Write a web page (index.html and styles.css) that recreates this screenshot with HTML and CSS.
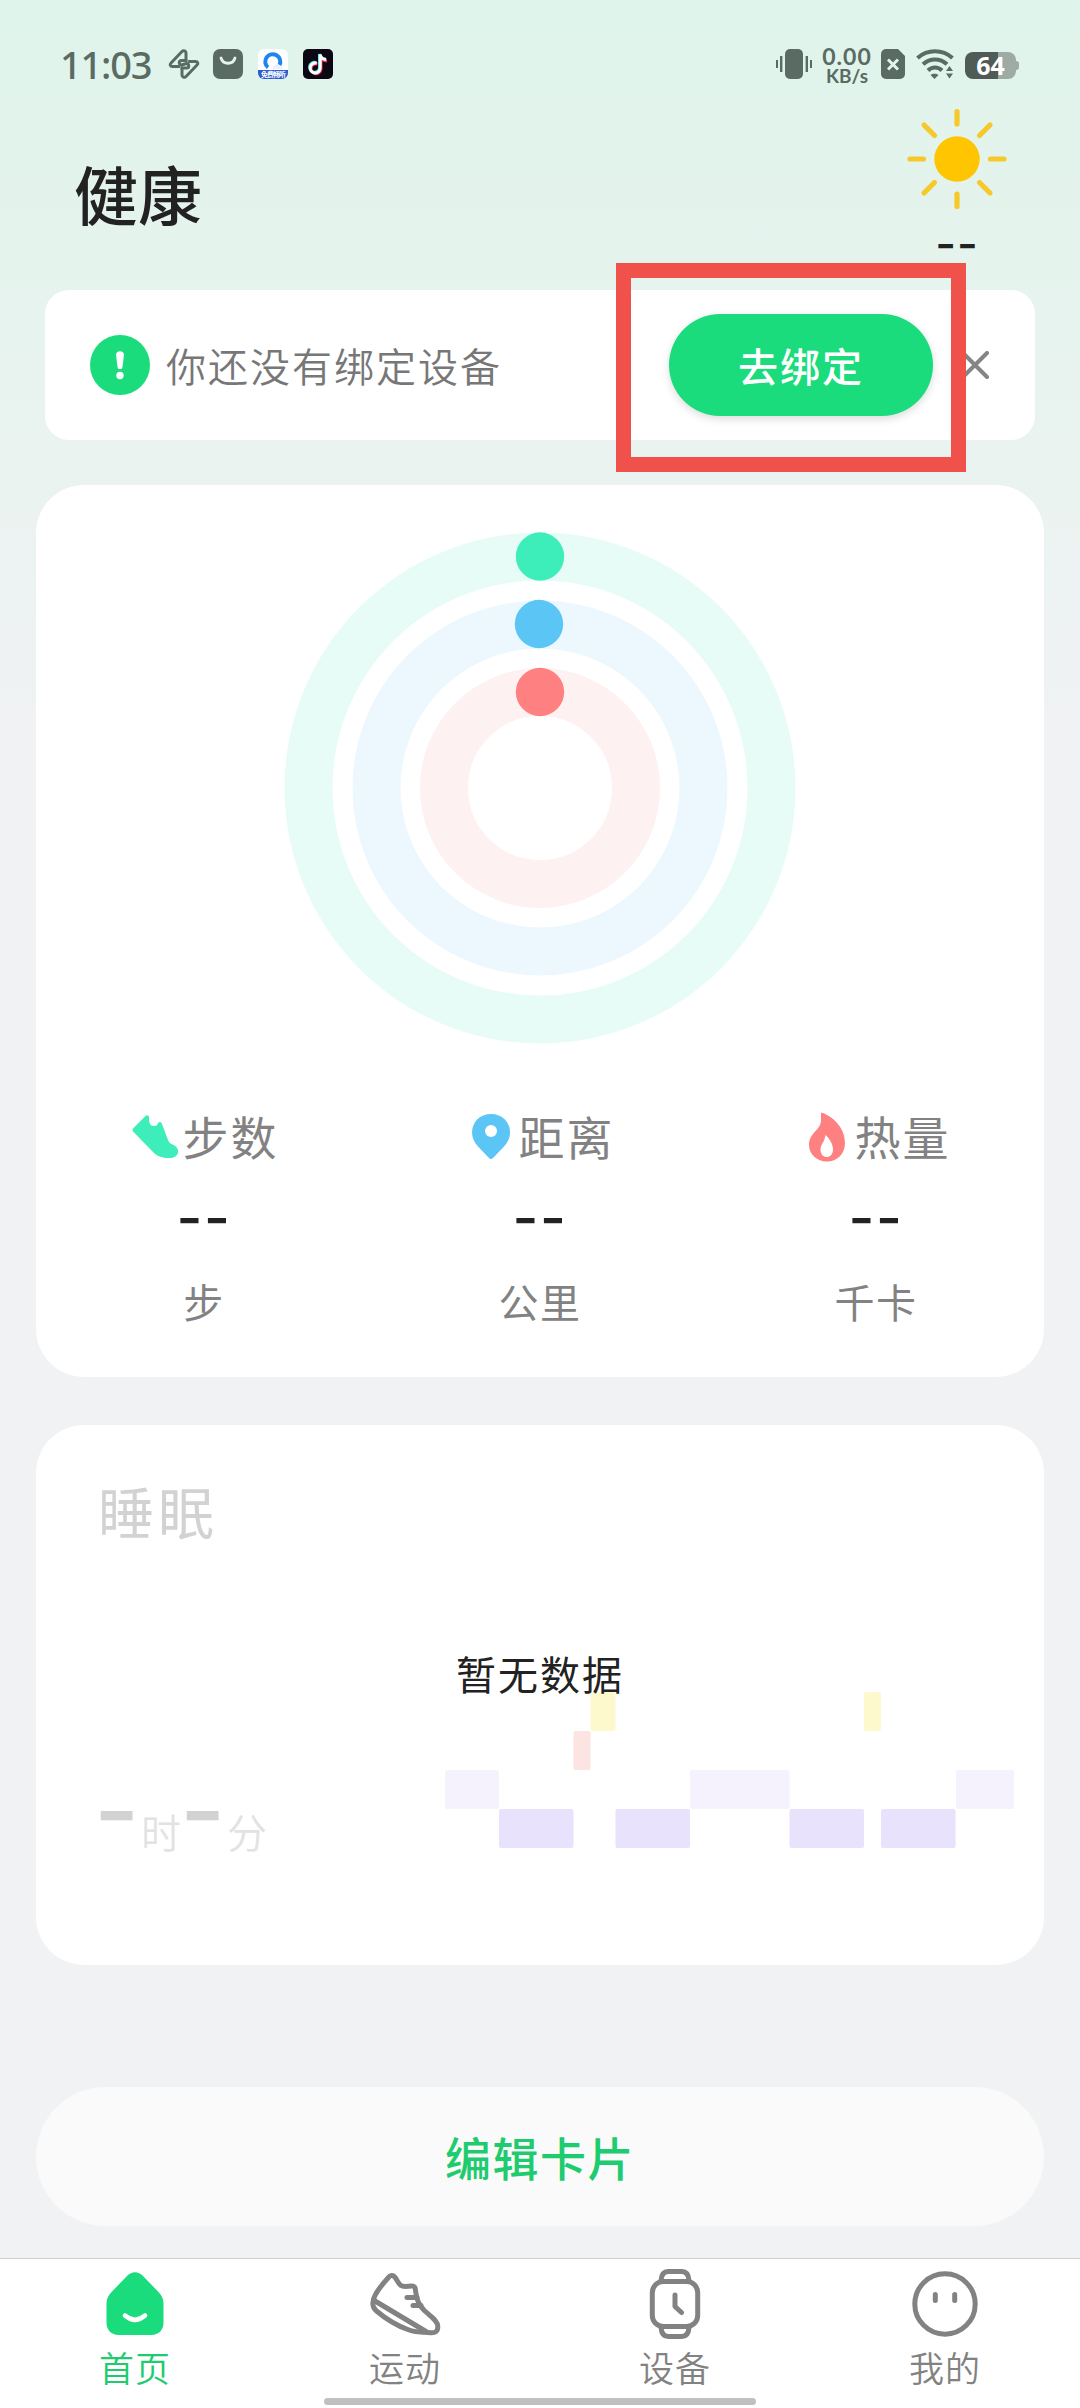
FILE: index.html
```html
<!DOCTYPE html>
<html lang="zh-CN">
<head>
<meta charset="utf-8">
<title>健康</title>
<link rel="stylesheet" href="styles.css">
</head>
<body>
<div class="screen">
  <header class="status">
    <div class="status-left">
      <span class="clock">11:03</span>
      <svg class="ic-flash" width="32" height="32" viewBox="0 0 32 32" fill="none" stroke="#5a6b63" stroke-width="3" stroke-linejoin="round" stroke-linecap="round"><path d="M11 18.500H4.500c-2.500 0-3-2-1.500-3.500L14 3.500c1.500-1.500 4-.500 4 1.500v7M21 13.500h6.500c2.500 0 3 2 1.500 3.500L18 28.500c-1.500 1.500-4 .500-4-1.500v-7"/><path d="M18 12.500h-4.500c-3 0-3 4 0 4.500l5-1.500c3 .500 3 4.500 0 4.500H14"/></svg>
      <svg class="ic-bag" width="30" height="30" viewBox="0 0 30 30"><rect width="30" height="30" rx="7" fill="#5a6b63"/><path d="M8 9c2 7 12 7 14 0" fill="none" stroke="#e6f3ec" stroke-width="2.800" stroke-linecap="round"/></svg>
      <div class="browser-app">
        <svg width="30" height="30" viewBox="0 0 30 30"><path d="M0 21V6a6 6 0 0 1 6-6h18a6 6 0 0 1 6 6v15z" fill="#fff"/><path d="M10 18.500A7.500 7.500 0 1 1 21.500 16" fill="none" stroke="#1e86ee" stroke-width="4"/><path d="M15 19c0-4 6-5 7-1.500 2 0 2.500 1 2.500 2.500H15z" fill="#e9f2fc"/><path d="M0 21h30v3a6 6 0 0 1-6 6H6a6 6 0 0 1-6-6z" fill="#2e5bd0"/></svg>
        <span>免费畅听</span>
      </div>
      <svg class="ic-note" width="30" height="30" viewBox="0 0 30 30"><rect width="30" height="30" rx="5" fill="#0b0813"/><g fill="none" stroke-width="3"><path d="M13 13.500a5 5 0 1 0 3.500 5V5c.500 3 3 5 6 5" stroke="#2ee6e2"/><path d="M14.500 15a5 5 0 1 0 3.500 5V7c.500 3 3 5 6 5" stroke="#f0305a"/><path d="M13.700 14.200a5 5 0 1 0 3.500 5V5.500c.500 3 3 5 6 5" stroke="#fff"/></g></svg>
    </div>
    <div class="status-right">
      <svg width="38" height="30" viewBox="0 0 38 30" fill="#5a6b63"><rect x="10" width="18" height="30" rx="5"/><path d="M5 7h2.400v16H5zM1 11h2v8H1zM30.600 7H33v16h-2.400zM35 11h2v8h-2z"/></svg>
      <div class="speed"><span class="speed-num">0.00</span><span class="speed-unit">KB/s</span></div>
      <svg class="ic-sim" width="24" height="30" viewBox="0 0 24 30"><path d="M5 0h12l7 7v18a5 5 0 0 1-5 5H5a5 5 0 0 1-5-5V5a5 5 0 0 1 5-5z" fill="#5a6b63"/><path d="M7 10.500l10 10m0-10l-10 10" stroke="#e2f4eb" stroke-width="3"/></svg>
      <svg class="ic-wifi" width="38" height="30" viewBox="0 0 38 30"><g fill="none" stroke="#5a6b63" stroke-width="4"><path d="M1.500 9c10-9 25-9 35 0"/><path d="M7 15.300c7-6.500 17-6.500 24 0"/><path d="M12 21.500c4-4 10-4 14 0"/></g><path d="M14.500 26c2-1.600 6-1.600 8 0l-4 4z" fill="#5a6b63"/><path d="M30 22l3.500-5 3.500 5zM30 24.500h7l-3.500 5z" fill="#5a6b63"/></svg>
      <div class="battery"><span>64</span></div>
    </div>
  </header>

  <div class="heading">
    <h1>健康</h1>
    <div class="weather">
      <svg width="104" height="104" viewBox="-52 -52 104 104"><circle r="22.700" fill="#ffc500"/><g stroke="#f6c829" stroke-width="5.200" stroke-linecap="round"><path d="M0-47.500V-35M0 35V47.500M-47 0H-33.500M33.500 0H47M-33-34l10.500 10.500M33-34L22.500-23.500M-33 34l10.500-10.500M33 34L22.500 23.500"/></g></svg>
      <span class="dash">--</span>
    </div>
  </div>

  <section class="banner">
    <svg width="60" height="60" viewBox="0 0 60 60"><circle cx="30" cy="30" r="30" fill="#1adc7c"/><path d="M26 19.500c0-4.500 8-4.500 8 0l-1.500 12.500c-.300 3-4.700 3-5 0z" fill="#fff"/><circle cx="30" cy="40.500" r="3.700" fill="#fff"/></svg>
    <span class="banner-text">你还没有绑定设备</span>
    <button class="bind">去绑定</button>
    <svg class="close" width="28" height="28" viewBox="0 0 28 28"><path d="M2 2l24 24M26 2L2 26" stroke="#858585" stroke-width="4" stroke-linecap="round"/></svg>
    <div class="marker"></div>
  </section>

  <section class="card activity">
    <svg class="rings" width="512" height="512" viewBox="-256 -256 512 512">
      <g fill="none" stroke-width="48">
        <circle r="231.500" stroke="#e8fcf7"/><circle r="163.500" stroke="#ecf8fe"/><circle r="96" stroke="#fef1f1"/>
      </g>
      <circle cy="-231.500" r="24.200" fill="#3eeeba"/><circle cx="-1" cy="-164" r="24.200" fill="#5bc5f5"/><circle cy="-96" r="24.200" fill="#ff8081"/>
    </svg>
    <div class="stats">
      <div class="stat">
        <div class="stat-name"><svg width="50" height="50" viewBox="0 0 50 50"><path d="M3.500 16L15.500 4c1.500-1.500 3.500-.500 3.500 1.500 0 9 3 9 8 8 .800-3.500 3.500-5 5-1.500l6 16c1 2.500 2 3.500 4.500 4.500 9 3.500 7 14-4 13.500-6 0-11-1.500-15-5.500L3.500 20c-1.300-1.300-1.300-2.700 0-4z" fill="#3eeeba"/></svg><span>步数</span></div>
        <span class="dash">--</span><span class="unit">步</span>
      </div>
      <div class="stat">
        <div class="stat-name"><svg width="50" height="50" viewBox="0 0 50 50"><path d="M25 2c11 0 19 8 19 18.500 0 5.500-2.500 10-6 14L27 46c-1.300 1.300-2.700 1.300-4 0L12 34.500c-3.500-4-6-8.500-6-14C6 10 14 2 25 2z" fill="#5bc5f5"/><circle cx="25" cy="19" r="6" fill="#fff"/></svg><span>距离</span></div>
        <span class="dash">--</span><span class="unit">公里</span>
      </div>
      <div class="stat">
        <div class="stat-name"><svg width="50" height="50" viewBox="0 0 50 50"><path d="M19 1.500c0-1 1-1 2-.500C33 6 43 17 43 31c0 11-8 18.500-18 18.500S7 42 7 33c0-13 13-15 12-26z" fill="#ff8081"/><path d="M23.500 23c5 4.500 7.500 10 7.500 14.500 0 10-12.500 10-12.500 0 0-3 1.500-5.500 3-8 1-2 1.500-4 2-6.500z" fill="#fff"/></svg><span>热量</span></div>
        <span class="dash">--</span><span class="unit">千卡</span>
      </div>
    </div>
  </section>

  <section class="card sleep">
    <h2>睡眠</h2>
    <div class="sleep-row">
      <div class="duration"><span class="dash">-</span><span class="t">时</span><span class="dash">-</span><span class="t">分</span></div>
      <svg width="569" height="156" viewBox="0 0 569 156">
        <g fill="#f5f2fe"><rect y="78" width="54" height="39" rx="2"/><rect x="245" y="78" width="99.500" height="39" rx="2"/><rect x="511" y="78" width="58" height="39" rx="2"/></g>
        <g fill="#e8e2fc"><rect x="54" y="117" width="74.500" height="39" rx="2"/><rect x="170.500" y="117" width="74.500" height="39" rx="2"/><rect x="344.500" y="117" width="74.500" height="39" rx="2"/><rect x="436" y="117" width="74.500" height="39" rx="2"/></g>
        <rect x="128.500" y="39" width="17" height="39" rx="2" fill="#fce4e2"/>
        <g fill="#fef9cd"><rect x="145.500" width="25" height="39" rx="2"/><rect x="419" width="17" height="39" rx="2"/></g>
      </svg>
    </div>
    <span class="empty">暂无数据</span>
  </section>

  <button class="edit">编辑卡片</button>

  <nav class="tabs">
    <a class="tab active">
      <svg width="80" height="80" viewBox="0 0 80 80"><path d="M32 11c5-5 11-5 16 0l15 15.500c3.500 3.500 5.500 7 5.500 12V58c0 7-5 12-12 12h-33c-7 0-12-5-12-12V38.500c0-5 2-8.500 5.500-12z" fill="#1adc7c"/><path d="M30 50.500c6.500 5.600 13.500 5.600 20 0" fill="none" stroke="#fff" stroke-width="4.600" stroke-linecap="round"/></svg>
      <span>首页</span>
    </a>
    <a class="tab">
      <svg width="80" height="80" viewBox="0 0 80 80" fill="none" stroke="#828282" stroke-width="5" stroke-linejoin="round" stroke-linecap="round"><path d="M23 13c2-3 5-3.500 7.500 0 4 6 4 8.500 10 8.500l6-.500c2.500 0 3.500.500 3.800 3 1.500 12 4 16.500 9 21.500 6 5.500 13.500 10 13.500 16 0 5-2.500 6.500-7 6.200-9-1-15.500 0-23-3.200C33 61 21 54 11.500 46 6.500 42 7 35.500 10.500 29.500 14 23 18 18.500 23 13z"/><path d="M10 36l51 30.500M42 32.500h10M48 40.500h8"/></svg>
      <span>运动</span>
    </a>
    <a class="tab">
      <svg width="80" height="80" viewBox="0 0 80 80" fill="none" stroke="#828282" stroke-width="5" stroke-linejoin="round" stroke-linecap="round"><rect x="17.300" y="16.500" width="45.400" height="45" rx="11"/><path d="M26 15.500c.500-6 2.500-9 7-9h14c4.500 0 6.500 3 7 9M26 62.500c.500 6 2.500 9 7 9h14c4.500 0 6.500-3 7-9M40 30v11.500l6.500 6"/></svg>
      <span>设备</span>
    </a>
    <a class="tab">
      <svg width="80" height="80" viewBox="0 0 80 80" fill="none" stroke="#828282" stroke-width="5" stroke-linecap="round"><circle cx="40" cy="39" r="30.200"/><path d="M30.300 29.500v6M49.700 29.500v6"/></svg>
      <span>我的</span>
    </a>
  </nav>
  <div class="home-bar"></div>
</div>
</body>
</html>
```
FILE: styles.css
```css
* { box-sizing: border-box; margin: 0; padding: 0; }
body { font-family: "Noto Sans CJK SC", sans-serif; }
svg { display: block; flex: none; }
button { border: 0; font-family: inherit; }
.screen {
  position: relative;
  width: 1080px;
  height: 2408px;
  display: flex;
  flex-direction: column;
  overflow: hidden;
  background: linear-gradient(#dff4ea 0, #f1f2f4 760px);
}
.dash { font-family: Inter, sans-serif; font-weight: 500; color: #222; }

.status { height: 128px; padding: 0 60px 0 60px; display: flex; justify-content: space-between; align-items: center; color: #5a6b63; }
.status-left, .status-right { display: flex; align-items: center; }
.clock { width: 108px; font: 500 38px/40px "Noto Sans", sans-serif; letter-spacing: -1.2px; white-space: nowrap; }
.ic-bag { margin-left: 13px; }
.browser-app { position: relative; margin-left: 15px; }
.browser-app span { position: absolute; left: -5px; bottom: 0; width: 40px; text-align: center; font-size: 7px; line-height: 9px; font-weight: 700; color: #fff; letter-spacing: -1px; }
.ic-note { margin-left: 15px; }
.speed { width: 56px; margin-left: 6px; display: flex; flex-direction: column; align-items: center; font-family: Lato, sans-serif; font-weight: 700; }
.speed-num { font-size: 23px; line-height: 22px; letter-spacing: 1px; }
.speed-unit { font-size: 19px; line-height: 17px; }
.ic-sim { margin-left: 6px; }
.ic-wifi { margin-left: 11px; }
.battery {
  position: relative;
  width: 51px; height: 27px;
  margin: 3px 4px 0 11px;
  border-radius: 8px;
  background: linear-gradient(90deg, #505a56 64%, #9eaba4 64%);
  font: 700 25px/27px "Noto Sans", sans-serif;
  color: #fff;
  text-align: center;
}
.battery::after { content: ""; position: absolute; left: 51px; top: 9px; width: 3px; height: 9px; border-radius: 0 3px 3px 0; background: #9eaba4; }

.heading { height: 162px; padding: 0 71px 0 74px; display: flex; justify-content: space-between; }
h1 { margin-top: 17px; font-size: 64px; line-height: 94px; font-weight: 500; color: #222; }
.weather { width: 104px; margin-top: -21px; display: flex; flex-direction: column; align-items: center; }
.weather .dash { font-size: 45px; line-height: 40px; margin-top: 13px; letter-spacing: 1px; }

.banner { position: relative; height: 150px; margin: 0 45px; padding: 0 46px 0 45px; border-radius: 24px; background: #fff; display: flex; align-items: center; }
.banner-text { margin-left: 16px; font-size: 40px; letter-spacing: 2px; color: #777; font-weight: 350; }
.bind { width: 264px; height: 102px; margin-left: auto; border-radius: 51px; background: #1adc7c; box-shadow: 0 3px 9px rgba(0,0,0,.14); color: #fff; font-size: 40px; letter-spacing: 2px; font-weight: 500; }
.close { margin-left: 28px; }
.marker { position: absolute; left: 571px; top: -27px; width: 350px; height: 209px; border: 15px solid #f0524b; }

.card { margin: 0 36px; border-radius: 48px; background: #fff; }
.activity { height: 892px; margin-top: 45px; padding-top: 47px; display: flex; flex-direction: column; align-items: center; }
.stats { width: 100%; margin-top: 58px; display: grid; grid-template-columns: repeat(3, 1fr); }
.stat { display: flex; flex-direction: column; align-items: center; color: #828282; }
.stat-name { display: flex; align-items: center; gap: 3px; font-size: 46px; line-height: 66px; height: 70px; letter-spacing: 2px; }
.stat-name span { padding-bottom: 4px; }
.stat .dash { font-size: 56px; line-height: 60px; margin-top: 16px; letter-spacing: 1.500px; }
.unit { margin-top: 23px; font-size: 40px; line-height: 60px; letter-spacing: 1.500px; }

.sleep { position: relative; height: 540px; margin-top: 48px; padding: 43px 30px 0 62px; }
h2 { font-size: 56px; line-height: 84px; letter-spacing: 4px; font-weight: 400; color: #d2d2d2; }
.sleep-row { margin-top: 140px; display: flex; justify-content: space-between; }
.duration { display: flex; align-items: flex-end; height: 169px; }
.duration .dash { width: 43px; font-size: 98px; line-height: 100px; text-indent: -4px; color: #d2d2d2; }
.duration .t { width: 43px; font-size: 40px; line-height: 60px; color: #e2e2e2; font-weight: 350; }
.empty { position: absolute; left: 0; right: 0; top: 218px; text-align: center; font-size: 40px; line-height: 60px; letter-spacing: 2px; color: #222; }

.edit { height: 139px; margin: 122px 36px 0; padding-bottom: 2px; border-radius: 70px; background: #fafafa; color: #1ecb6e; font-size: 46px; font-weight: 500; letter-spacing: 1.500px; }

.tabs { height: 150px; margin-top: 32px; border-top: 1px solid #cfcfcf; background: #fff; display: grid; grid-template-columns: repeat(4, 1fr); flex: none; }
.tab { display: flex; flex-direction: column; align-items: center; padding-top: 6px; font-size: 35px; line-height: 50px; letter-spacing: 1px; color: #828282; font-weight: 350; }
.tab span { margin-top: -3px; }
.active { color: #1ecb6e; }
.home-bar { position: absolute; left: 324px; bottom: 3px; width: 432px; height: 7px; border-radius: 4px; background: #c0c0c0; }
```
